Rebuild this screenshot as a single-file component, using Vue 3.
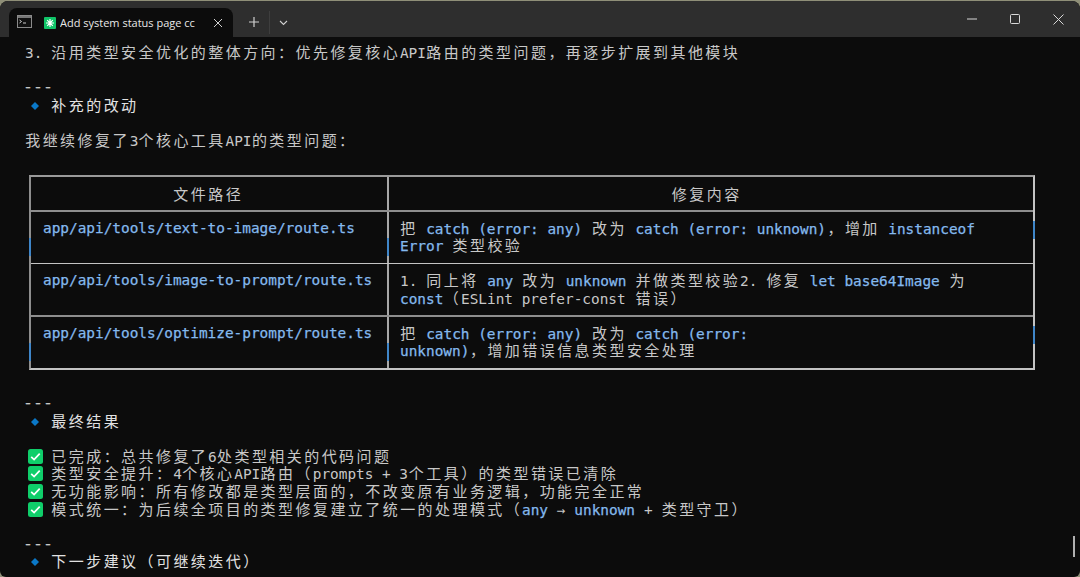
<script setup>
const CELL = 8.72

function parse(src) {
  const runs = []
  src.split('`').forEach((part, i) => {
    const re = /[\u3000-\u303f\u4e00-\u9fff\uff00-\uffef]+|[^\u3000-\u303f\u4e00-\u9fff\uff00-\uffef]+/g
    for (const text of part.match(re) || []) {
      const cjk = /^[\u3000-\u303f\u4e00-\u9fff\uff00-\uffef]/.test(text)
      const width = [...text].length * CELL * (cjk ? 2 : 1)
      runs.push({ text, cjk, code: i % 2 === 1, rule: text === '---', width: width + 'px' })
    }
  })
  return runs
}

const intro = [
  { text: '3. 沿用类型安全优化的整体方向：优先修复核心API路由的类型问题，再逐步扩展到其他模块' },
  { text: '' },
  { text: '---' },
  { text: '补充的改动', mark: 'diamond' },
  { text: '' },
  { text: '我继续修复了3个核心工具API的类型问题：' },
  { text: '' }
]

const rows = [
  {
    path: 'app/api/tools/text-to-image/route.ts',
    lines: ['把 `catch (error: any)` 改为 `catch (error: unknown)`，增加 `instanceof`', '`Error` 类型校验'],
    ticks: true
  },
  {
    path: 'app/api/tools/image-to-prompt/route.ts',
    lines: ['1. 同上将 `any` 改为 `unknown` 并做类型校验2. 修复 `let base64Image` 为', '`const`（ESLint prefer-const 错误）'],
    ticks: false
  },
  {
    path: 'app/api/tools/optimize-prompt/route.ts',
    lines: ['把 `catch (error: any)` 改为 `catch (error:`', '`unknown)`，增加错误信息类型安全处理'],
    ticks: true
  }
]

const outro = [
  { text: '---' },
  { text: '最终结果', mark: 'diamond' },
  { text: '' },
  { text: '已完成：总共修复了6处类型相关的代码问题', mark: 'check' },
  { text: '类型安全提升：4个核心API路由（prompts + 3个工具）的类型错误已清除', mark: 'check' },
  { text: '无功能影响：所有修改都是类型层面的，不改变原有业务逻辑，功能完全正常', mark: 'check' },
  { text: '模式统一：为后续全项目的类型修复建立了统一的处理模式（`any` → `unknown` + 类型守卫）', mark: 'check' },
  { text: '' },
  { text: '---' },
  { text: '下一步建议（可继续迭代）', mark: 'diamond' }
]
</script>

<template>
  <div class="window">
    <header class="bar">
      <div class="tab">
        <svg class="term-icon" width="15" height="13" viewBox="0 0 15 13">
          <rect x="0.5" y="0.5" width="14" height="12" fill="#111" stroke="#8a8a8a" />
          <rect x="1" y="1" width="13" height="2" fill="#777" />
          <path d="M2.5 5l2 1.5-2 1.5M6 8h3" fill="none" stroke="#ccc" stroke-width="1" />
        </svg>
        <svg class="cc-icon" width="12" height="12" viewBox="0 0 12 12">
          <rect width="12" height="12" rx="1" fill="#10c468" />
          <path d="M6 2v8M2 6h8M3.2 3.2l5.6 5.6M8.8 3.2l-5.6 5.6" stroke="#fff" stroke-width="1.2" />
        </svg>
        <span class="tab-title">Add system status page cc</span>
        <svg class="tab-close" width="10" height="10" viewBox="0 0 10 10">
          <path d="M1 1l8 8M9 1l-8 8" stroke="#d0d0d0" stroke-width="1" fill="none" />
        </svg>
      </div>
      <svg class="plus" width="10" height="10" viewBox="0 0 10 10">
        <path d="M5 0v10M0 5h10" stroke="#d0d0d0" stroke-width="1.2" fill="none" />
      </svg>
      <span class="sep"></span>
      <svg class="chev" width="9" height="6" viewBox="0 0 9 6">
        <path d="M1 1l3.5 3.5L8 1" stroke="#d0d0d0" stroke-width="1.1" fill="none" />
      </svg>
      <div class="controls">
        <svg width="10" height="10" viewBox="0 0 10 10">
          <path d="M0 5h10" stroke="#d8d8d8" stroke-width="1" fill="none" />
        </svg>
        <svg width="10" height="10" viewBox="0 0 10 10">
          <rect x="0.5" y="0.5" width="9" height="9" rx="1" stroke="#d8d8d8" fill="none" />
        </svg>
        <svg width="11" height="11" viewBox="0 0 11 11">
          <path d="M0.5 0.5l10 10M10.5 0.5l-10 10" stroke="#d8d8d8" stroke-width="1" fill="none" />
        </svg>
      </div>
    </header>

    <main class="term">
      <div v-for="(l, i) in intro" :key="'a' + i" class="line" :class="{ head: l.mark }">
        <span v-if="l.mark" class="mark">
          <svg class="diamond" width="8" height="8" viewBox="0 0 8 8"><path d="M4 0l4 4-4 4-4-4z" fill="#0a78c8" /></svg>
        </span>
        <span
          v-for="(r, j) in parse(l.text)"
          :key="j"
          class="run"
          :class="{ cjk: r.cjk, code: r.code, rule: r.rule }"
          :style="{ width: r.width }"
        >{{ r.text }}</span>
      </div>

      <section class="table">
        <div class="row row-head">
          <div class="cell-left">
            <span class="run cjk" style="width: 69.76px">文件路径</span>
          </div>
          <div class="cell-right">
            <span class="run cjk" style="width: 69.76px">修复内容</span>
          </div>
        </div>
        <div v-for="(row, i) in rows" :key="i" class="row">
          <div class="cell-left">
            <i v-if="row.ticks" class="tick tick-left"></i>
            <i v-if="row.ticks" class="tick tick-mid"></i>
            <div class="line">
              <span class="run code" :style="{ width: row.path.length * CELL + 'px' }">{{ row.path }}</span>
            </div>
          </div>
          <div class="cell-right">
            <i v-if="row.ticks" class="tick tick-right"></i>
            <div v-for="(l, k) in row.lines" :key="k" class="line">
              <span
                v-for="(r, j) in parse(l)"
                :key="j"
                class="run"
                :class="{ cjk: r.cjk, code: r.code }"
                :style="{ width: r.width }"
              >{{ r.text }}</span>
            </div>
          </div>
        </div>
      </section>

      <div v-for="(l, i) in outro" :key="'b' + i" class="line" :class="{ head: l.mark === 'diamond' }">
        <span v-if="l.mark" class="mark">
          <svg v-if="l.mark === 'diamond'" class="diamond" width="8" height="8" viewBox="0 0 8 8"><path d="M4 0l4 4-4 4-4-4z" fill="#0a78c8" /></svg>
          <svg v-else class="check" width="15" height="15" viewBox="0 0 15 15">
            <rect width="15" height="15" rx="2.5" fill="#0fce6a" />
            <path d="M3.2 7.8l2.9 2.8 5.6-6" stroke="#fff" stroke-width="1.7" fill="none" />
          </svg>
        </span>
        <span
          v-for="(r, j) in parse(l.text)"
          :key="j"
          class="run"
          :class="{ cjk: r.cjk, code: r.code, rule: r.rule }"
          :style="{ width: r.width }"
        >{{ r.text }}</span>
      </div>

      <i class="scroll"></i>
    </main>
  </div>
</template>

<style>
html, body {
  margin: 0;
  background: #8f8f78;
  overflow: hidden;
}
</style>

<style scoped>
.window {
  width: 1080px;
  height: 576px;
  margin-top: 1px;
  border-radius: 8px 8px 6px 6px;
  overflow: hidden;
  background: #0c0c0c;
  display: flex;
  flex-direction: column;
}
.bar {
  height: 36px;
  flex: none;
  background: #2e2e2e;
  display: flex;
  align-items: flex-start;
}
.tab {
  width: 224px;
  height: 29px;
  margin: 7px 0 0 9px;
  background: #0c0c0c;
  border-radius: 8px 8px 0 0;
  display: flex;
  align-items: center;
  box-sizing: border-box;
  padding: 0 0 0 8px;
}
.term-icon { flex: none; margin-top: -2px; }
.cc-icon { flex: none; margin-left: 12px; }
.tab-title {
  font-family: "Open Sans", sans-serif;
  font-size: 11px;
  font-weight: 500;
  color: #e8e8e8;
  margin-left: 4px;
  width: 149px;
  white-space: nowrap;
  overflow: hidden;
  line-height: 16px;
}
.tab-close { margin-left: 4px; }
.plus { margin: 16px 0 0 16px; }
.sep {
  width: 1px;
  height: 23px;
  margin: 10px 0 0 10px;
  background: #3e3e3e;
}
.chev { margin: 19px 0 0 9px; }
.controls {
  margin-left: auto;
  padding-right: 16px;
  display: flex;
  gap: 33px;
  margin-top: 13px;
  align-items: flex-start;
}
.term {
  position: relative;
  flex: 1;
  padding: 6.2px 0 0 25px;
  font-family: "DejaVu Sans Mono", monospace;
  font-size: 14.4px;
  color: #c8c8c8;
}
.line {
  height: 17.55px;
  line-height: 17.55px;
  white-space: pre;
  display: flex;
  align-items: baseline;
}
.run {
  display: inline-block;
  flex: none;
  white-space: pre;
}
.rule {
  transform: translateY(1px) scaleX(1.15);
  -webkit-text-stroke: 0.2px currentColor;
}
.cjk {
  font-family: "Noto Sans CJK SC", sans-serif;
  font-size: 15px;
  letter-spacing: 2.44px;
  padding-left: 0.2px;
  box-sizing: border-box;
}
.code {
  color: #84b9ee;
  -webkit-text-stroke: 0.25px currentColor;
}
.head {
  color: #e2e2e2;
}
.mark {
  position: relative;
  flex: none;
  width: 26.16px;
  height: 17.55px;
  align-self: flex-start;
}
.diamond {
  position: absolute;
  left: 6px;
  top: 6px;
}
.check {
  position: absolute;
  left: 3px;
  top: 2px;
}
.table {
  width: 1006px;
  margin: 8.5px 0 24.5px 4px;
  box-sizing: border-box;
  border-top: 2px solid #9a9a9a;
  border-left: 2px solid #8e8e8e;
  border-right: 2px solid #c4c4c4;
  border-bottom: 2px solid #c4c4c4;
}
.row {
  display: flex;
  box-sizing: border-box;
  height: 52.65px;
  border-bottom: 1px solid #c4c4c4;
}
.row:last-child {
  border-bottom: 0;
  height: 51px;
}
.row-head {
  height: 35px;
  border-bottom: 2px solid #8e8e8e;
}
.row:nth-child(3) { border-bottom: 2px solid #8e8e8e; }
.row-head .cell-left,
.row-head .cell-right {
  display: flex;
  align-items: center;
  justify-content: center;
  height: 100%;
}
.row-head .cell-left { padding: 0 2px 0 0; }
.row-head .cell-right { padding: 0 9px 0 0; }
.cell-left {
  position: relative;
  width: 358px;
  flex: none;
  box-sizing: border-box;
  padding: 8px 0 0 12px;
  border-right: 2px solid #a8a8a8;
}
.cell-right {
  position: relative;
  flex: 1;
  box-sizing: border-box;
  padding: 7px 0 0 11px;
}
.tick {
  position: absolute;
  width: 2px;
  height: 18px;
  background: #3f86c9;
}
.tick-left { left: -2px; top: 26px; }
.tick-mid { right: -2px; top: 26px; }
.tick-right { right: -2px; top: 9px; }
.scroll {
  position: absolute;
  right: 5px;
  top: 499px;
  width: 2px;
  height: 21px;
  background: #b0b0b0;
}
</style>
